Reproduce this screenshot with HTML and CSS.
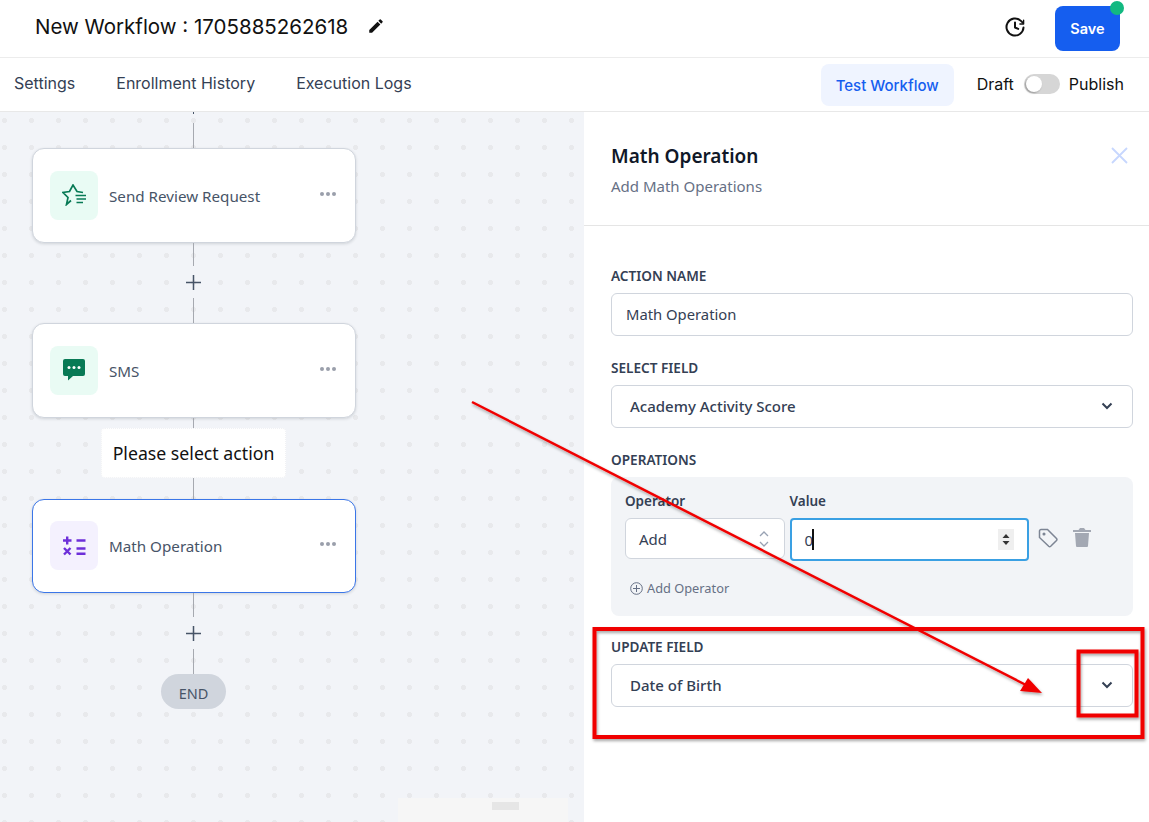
FILE: index.html
```html
<!DOCTYPE html>
<html lang="en">
<head>
<meta charset="utf-8">
<title>New Workflow</title>
<link rel="stylesheet" href="styles.css">
</head>
<body>
<header class="topbar">
  <div class="title-wrap">
    <h1 class="title">New Workflow : 1705885262618</h1>
    <svg class="pencil" viewBox="0 0 24 24" width="18" height="18"><path fill="#111" d="M3 17.25V21h3.75L17.81 9.94l-3.75-3.75L3 17.25zM20.71 7.04a1 1 0 0 0 0-1.41l-2.34-2.34a1 1 0 0 0-1.41 0l-1.83 1.83 3.75 3.75 1.83-1.83z"/></svg>
  </div>
  <div class="top-actions">
    <svg class="history" viewBox="0 0 24 24" width="24" height="24" fill="none" stroke="#111" stroke-width="2" stroke-linecap="round" stroke-linejoin="round"><path d="M20.5 12.5a8.5 8.5 0 1 1-2.6-6.6l2.1 2"/><path d="M20.6 5.2V9h-3.7" stroke-width="1.4"/><path d="M12 7.5V12.5l3.2 1.4"/></svg>
    <button class="save">Save<span class="save-dot"></span></button>
  </div>
</header>
<nav class="tabbar">
  <div class="tabs">
    <a class="tab">Settings</a>
    <a class="tab">Enrollment History</a>
    <a class="tab">Execution Logs</a>
  </div>
  <div class="tab-actions">
    <button class="test">Test Workflow</button>
    <div class="publish">
      <span>Draft</span>
      <span class="toggle"><span class="knob"></span></span>
      <span>Publish</span>
    </div>
  </div>
</nav>
<main class="main">
  <section class="canvas">
    <div class="line l-a"></div>
    <div class="line l-b"></div>
    <div class="node">
      <div class="node-icon green">
        <svg viewBox="0 0 24 22" width="24" height="22" fill="none" stroke="#087a55" stroke-width="1.7" stroke-linejoin="miter"><path d="M9 16.500L4.500 20.500L6 13.500L1 8.500L7.500 7.500L11 1L15 7.500L21 8.500"/><path d="M13.500 11.500H24M14.500 15H24M14.500 18.500H21"/></svg>
      </div>
      <span class="node-label">Send Review Request</span>
      <span class="dots"><i></i><i></i><i></i></span>
    </div>
    <div class="line l-c"></div>
    <svg class="plus" viewBox="0 0 15 15" width="15" height="15"><path d="M7.500 0v15M0 7.500h15" stroke="#475467" stroke-width="1.500"/></svg>
    <div class="line l-d"></div>
    <div class="node">
      <div class="node-icon green">
        <svg viewBox="0 0 22 22" width="22" height="22"><path fill="#087a55" d="M2 0h18a2 2 0 0 1 2 2v13a2 2 0 0 1-2 2H10l-5 4.500V17H2a2 2 0 0 1-2-2V2a2 2 0 0 1 2-2z"/><circle cx="6" cy="8.500" r="1.500" fill="#fff"/><circle cx="11" cy="8.500" r="1.500" fill="#fff"/><circle cx="16" cy="8.500" r="1.500" fill="#fff"/></svg>
      </div>
      <span class="node-label">SMS</span>
      <span class="dots"><i></i><i></i><i></i></span>
    </div>
    <div class="line l-e"></div>
    <div class="hint">Please select action</div>
    <div class="line l-f"></div>
    <div class="node active">
      <div class="node-icon purple">
        <svg viewBox="0 0 24 20" width="24" height="20" fill="none" stroke="#6d2fd9" stroke-width="2.400"><path d="M1 4.500h8.500M5.200 0.500v8M14.500 4.500h9M2 12l6.500 6.500M8.500 12L2 18.500M14.500 12.500h9M14.500 17.800h9"/></svg>
      </div>
      <span class="node-label">Math Operation</span>
      <span class="dots"><i></i><i></i><i></i></span>
    </div>
    <div class="line l-c2"></div>
    <svg class="plus" viewBox="0 0 15 15" width="15" height="15"><path d="M7.500 0v15M0 7.500h15" stroke="#475467" stroke-width="1.500"/></svg>
    <div class="line l-d"></div>
    <div class="end">END</div>
    <div class="minimap"><span></span></div>
  </section>
  <aside class="panel">
    <div class="panel-head">
      <div>
        <h2 class="panel-title">Math Operation</h2>
        <p class="panel-sub">Add Math Operations</p>
      </div>
      <svg class="close" viewBox="0 0 17 17" width="17" height="17"><path d="M1 1l15 15M16 1L1 16" stroke="#c7d7fe" stroke-width="1.800"/></svg>
    </div>
    <div class="form">
      <label class="field-label">ACTION NAME</label>
      <div class="input">Math Operation</div>
      <label class="field-label">SELECT FIELD</label>
      <div class="select">
        <span>Academy Activity Score</span>
        <svg viewBox="0 0 12 8" width="12" height="8" fill="none" stroke="#344054" stroke-width="2"><path d="M1.500 1.500L6 6l4.500-4.500"/></svg>
      </div>
      <label class="field-label">OPERATIONS</label>
      <div class="ops">
        <div class="op-row">
          <div class="op-col">
            <span class="op-label">Operator</span>
            <div class="op-select">
              <span>Add</span>
              <svg viewBox="0 0 10 18" width="10" height="18" fill="none" stroke="#98a2b3" stroke-width="1.300"><path d="M1 6l4-4 4 4M1 12l4 4 4-4"/></svg>
            </div>
          </div>
          <div class="op-col">
            <span class="op-label">Value</span>
            <div class="op-value">
              <span class="value-text">0<span class="caret"></span></span>
              <span class="spin"><svg viewBox="0 0 8 13" width="8" height="13"><path fill="#333" d="M4 1l3.500 4h-7zM4 12L.5 8h7z"/></svg></span>
            </div>
          </div>
          <svg class="tag" viewBox="0 0 20 20" width="20" height="20" fill="none" stroke="#7d8594" stroke-width="1.500"><path d="M1.500 3A1.500 1.500 0 0 1 3 1.500h6.500L18.500 10.500a1.500 1.500 0 0 1 0 2l-5.800 5.800a1.500 1.500 0 0 1-2 0L1.500 9.500z"/><circle cx="6" cy="6" r=".8" fill="#7d8594"/></svg>
          <svg class="trash" viewBox="0 0 18 20" width="18" height="20"><path fill="#a3a8b3" d="M0 3h5.500L7 1h4l1.500 2H18v2H0zM2 6h14l-1 13a1 1 0 0 1-1 1H4a1 1 0 0 1-1-1z"/></svg>
        </div>
        <div class="add-op">
          <svg viewBox="0 0 13 13" width="13" height="13" fill="none" stroke="#667085"><circle cx="6.500" cy="6.500" r="5.800"/><path d="M6.500 3v7M3 6.500h7"/></svg>
          <span>Add Operator</span>
        </div>
      </div>
      <label class="field-label">UPDATE FIELD</label>
      <div class="select">
        <span>Date of Birth</span>
        <svg viewBox="0 0 12 8" width="12" height="8" fill="none" stroke="#344054" stroke-width="2"><path d="M1.500 1.500L6 6l4.500-4.500"/></svg>
      </div>
    </div>
  </aside>
</main>
<svg class="annotations" viewBox="0 0 1149 822" width="1149" height="822">
  <defs><filter id="sh" x="-5%" y="-5%" width="110%" height="110%"><feDropShadow dx="1" dy="2" stdDeviation="1.500" flood-color="#000" flood-opacity=".35"/></filter></defs>
  <g filter="url(#sh)">
    <path d="M472 402L1028 686" stroke="#f00000" stroke-width="2.500" fill="none"/>
    <path d="M1042 693L1020 691L1028 678z" fill="#f00000"/>
    <rect x="594.500" y="629" width="548" height="108" fill="none" stroke="#f00000" stroke-width="4"/>
    <rect x="1078.500" y="651.500" width="58" height="64" fill="none" stroke="#f00000" stroke-width="4"/>
  </g>
</svg>
</body>
</html>
```
FILE: styles.css
```css
* { box-sizing: border-box; }
html, body { margin: 0; padding: 0; }
body {
  width: 1149px;
  height: 822px;
  overflow: hidden;
  position: relative;
  background: #fff;
  font-family: "Noto Sans", sans-serif;
  color: #101828;
}
button { font: inherit; border: 0; cursor: pointer; }

.topbar {
  height: 58px;
  display: flex;
  align-items: center;
  justify-content: space-between;
  padding: 0 29px 0 35px;
  border-bottom: 1px solid #ececec;
}
.title-wrap { display: flex; align-items: center; gap: 19px; padding-bottom: 5px; }
.title {
  margin: 0;
  font: 400 20.500px "Inter", sans-serif;
  color: #111;
}
.top-actions { display: flex; align-items: center; gap: 28px; }
.history { margin-bottom: 3px; }
.save {
  position: relative;
  width: 65px;
  height: 45px;
  border-radius: 8px;
  background: #155eef;
  color: #fff;
  font: 600 14.500px "Inter", sans-serif;
}
.save-dot {
  position: absolute;
  right: -4px;
  top: -5px;
  width: 14px;
  height: 14px;
  border-radius: 50%;
  background: #12b981;
}

.tabbar {
  height: 54px;
  display: flex;
  align-items: center;
  justify-content: space-between;
  padding: 0 25px 0 14px;
  border-bottom: 1px solid #e8e8e8;
}
.tabs { display: flex; gap: 41px; margin-top: -3px; }
.tab { font: 400 16px "Inter", sans-serif; color: #344054; }
.tab-actions { display: flex; align-items: center; gap: 23px; }
.test {
  width: 133px;
  height: 42px;
  margin-top: 1px;
  border-radius: 8px;
  background: #eff4ff;
  color: #155eef;
  font: 500 15px "Inter", sans-serif;
}
.publish {
  display: flex;
  align-items: center;
  gap: 9px;
  margin-top: -2px;
  font: 400 16px "Inter", sans-serif;
  color: #111;
}
.toggle {
  display: block;
  width: 36px;
  height: 20px;
  margin: 1px 0 0 1px;
  border-radius: 10px;
  background: #d6d6d6;
  padding: 2px;
}
.knob {
  display: block;
  width: 16px;
  height: 16px;
  border-radius: 50%;
  background: #fff;
  box-shadow: -1px 1px 2px rgba(0,0,0,.3);
}

.main { display: flex; height: 710px; }
.canvas {
  position: relative;
  width: 584px;
  display: flex;
  flex-direction: column;
  align-items: center;
  padding-right: 197px;
  background-color: #f2f4f8;
  background-image: radial-gradient(circle, #e8e9ec 2.300px, transparent 2.900px);
  background-size: 27px 27px;
  background-position: -9px -5px;
  overflow: hidden;
}
.line { width: 1px; background: #a6a9b0; flex: none; }
.l-a { height: 2px; margin-bottom: 9px; background: #475467; }
.l-b { height: 25px; }
.l-c { height: 23px; }
.l-c2 { height: 24px; }
.l-d { height: 25px; }
.l-e { height: 10px; }
.l-f { height: 21px; }
.plus { flex: none; margin: 9px 0 8px; display: block; }
.node {
  flex: none;
  width: 324px;
  height: 95px;
  display: flex;
  align-items: center;
  padding: 0 19px 1px 17px;
  background: #fff;
  border: 1px solid #d0d5dd;
  border-radius: 12px;
  box-shadow: 0 1px 3px rgba(16,24,40,.15);
}
.node.active { height: 94px; border-color: #3b76e8; }
.node-icon {
  width: 48px;
  height: 49px;
  border-radius: 8px;
  display: flex;
  align-items: center;
  justify-content: center;
  flex: none;
}
.green { background: #e9fbf4; }
.purple { background: #f4f1fe; }
.node-label {
  margin: 1px 0 0 11.500px;
  font-size: 15.200px;
  color: #475467;
  flex: 1;
}
.dots { display: flex; gap: 2px; margin-top: -3px; }
.dots i { width: 4px; height: 4px; border-radius: 50%; background: #9a9fab; display: block; }
.hint {
  flex: none;
  width: 185px;
  height: 50px;
  line-height: 48px;
  text-align: center;
  background: #fff;
  border: 1px dotted #f0f1f4;
  border-radius: 4px;
  font-size: 17.700px;
  color: #111;
}
.end {
  flex: none;
  width: 65px;
  height: 35px;
  line-height: 38px;
  text-align: center;
  border-radius: 18px;
  background: #d0d5dd;
  font-size: 14.500px;
  color: #475467;
}
.minimap {
  position: absolute;
  left: 398px;
  bottom: 0;
  width: 170px;
  height: 24px;
  background: #f6f6f6;
  display: flex;
  justify-content: center;
}
.minimap span { width: 27px; height: 8px; margin: 4px 0 0 45px; background: #e6e6e6; display: block; }

.panel { flex: 1; background: #fff; }
.panel-head {
  height: 114px;
  display: flex;
  justify-content: space-between;
  padding: 31px 21px 0 27px;
  border-bottom: 1px solid #e5e5e5;
}
.panel-title { margin: 0; font-size: 19px; font-weight: 600; line-height: 26px; color: #101828; }
.panel-sub { margin: 7px 0 0; font-size: 15px; line-height: 20px; color: #667085; }
.close { margin-top: 4px; }
.form { padding: 40px 16px 0 27px; }
.field-label {
  display: block;
  height: 20px;
  line-height: 20px;
  font-size: 13.600px;
  font-weight: 600;
  color: #344054;
  margin-bottom: 7px;
}
.input, .select {
  height: 43px;
  display: flex;
  align-items: center;
  background: #fff;
  border: 1px solid #d0d5dd;
  border-radius: 6px;
  font-size: 15px;
  color: #344054;
  margin-bottom: 22px;
  padding-bottom: 2px;
}
.input { padding-left: 14px; padding-right: 14px; font-size: 14.800px; }
.select { padding-left: 18px; padding-right: 19px; justify-content: space-between; font-weight: 500; }
.ops {
  height: 139px;
  background: #f2f4f7;
  border-radius: 8px;
  padding: 14px 14px 0;
  margin-bottom: 21px;
}
.op-row { display: flex; align-items: flex-start; }
.op-col { display: flex; flex-direction: column; margin-right: 5px; }
.op-label { height: 20px; line-height: 20px; font-size: 13.500px; font-weight: 600; color: #344054; margin-bottom: 7px; }
.op-select {
  width: 159.500px;
  height: 41px;
  display: flex;
  align-items: center;
  justify-content: space-between;
  padding: 0 15px 0 13px;
  background: #fff;
  border: 1px solid #d0d5dd;
  border-radius: 6px;
  font-size: 15px;
  color: #344054;
}
.op-value {
  width: 239.500px;
  height: 43px;
  display: flex;
  align-items: center;
  justify-content: space-between;
  padding: 0 13px;
  background: #fff;
  border: 2px solid #3aa0e3;
  border-radius: 4px;
  font-size: 15px;
  color: #344054;
}
.value-text { position: relative; }
.caret { position: absolute; left: 7px; top: -1px; width: 2px; height: 21px; background: #111; }
.spin {
  width: 16px;
  height: 21px;
  display: flex;
  align-items: center;
  justify-content: center;
  background: #efefef;
}
.tag { margin: 37px 0 0 4px; }
.trash { margin: 36px 0 0 15px; }
.add-op {
  display: flex;
  align-items: center;
  gap: 4px;
  margin-top: 18px;
  padding-left: 5px;
  font-size: 12.800px;
  color: #667085;
}

.annotations { position: absolute; left: 0; top: 0; pointer-events: none; }
```
